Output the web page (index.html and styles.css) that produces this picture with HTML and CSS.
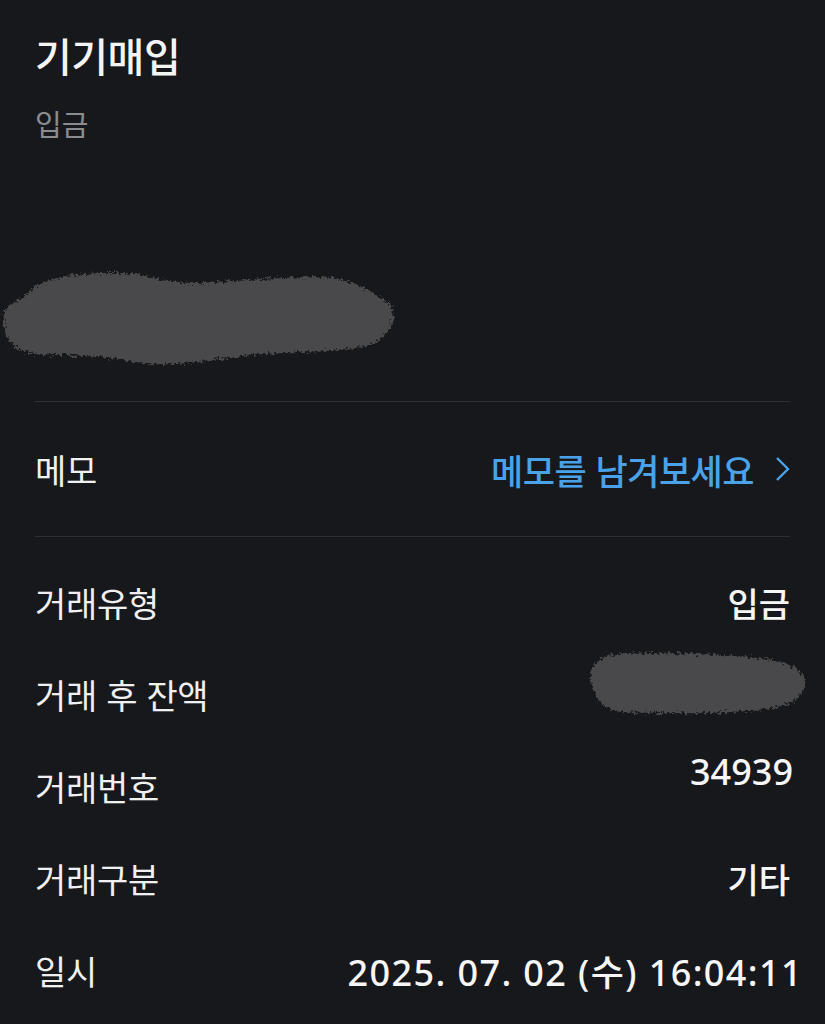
FILE: index.html
```html
<!DOCTYPE html>
<html lang="ko">
<head>
<meta charset="utf-8">
<link rel="stylesheet" href="styles.css">
</head>
<body>
<div class="page">
  <header class="head">
    <h1 class="title">기기매입</h1>
    <div class="subtitle">입금</div>
    <div class="amount">
      <svg class="blob1" width="420" height="120" viewBox="0 0 420 120">
        <defs>
          <filter id="rough" x="-10%" y="-20%" width="120%" height="140%">
            <feTurbulence type="fractalNoise" baseFrequency="0.35" numOctaves="3" seed="4" result="n"/>
            <feDisplacementMap in="SourceGraphic" in2="n" scale="9" xChannelSelector="R" yChannelSelector="G"/>
          </filter>
        </defs>
        <path filter="url(#rough)" fill="#4a4a4c" d="M4 52 C10 45 22 40 30 32 C42 20 70 14 110 14 C150 14 160 24 200 24 C240 22 280 18 320 18 C350 18 380 36 392 48 C398 62 386 80 370 86 C340 94 300 92 250 96 C200 102 170 110 130 102 C90 94 60 98 30 94 C10 90 2 76 4 52 Z"/>
      </svg>
    </div>
  </header>

  <div class="memo">
    <span class="label">메모</span>
    <span class="memo-link">메모를 남겨보세요
      <svg class="chev" width="16" height="26" viewBox="0 0 16 26"><polyline points="3,2 14,13 3,24" fill="none" stroke="#4aa3e8" stroke-width="2.4" stroke-linejoin="miter"/></svg>
    </span>
  </div>

  <div class="rows">
    <div class="row"><span class="label">거래유형</span><span class="value">입금</span></div>
    <div class="row"><span class="label">거래 후 잔액</span><span class="value blob-cell">
      <svg class="blob2" width="230" height="80" viewBox="0 0 230 80">
        <path filter="url(#rough)" fill="#4a4a4c" d="M8 34 C12 20 20 12 40 12 C90 10 150 12 190 18 C210 22 222 30 224 40 C222 52 214 62 190 66 C150 72 90 72 40 70 C22 68 10 54 8 34 Z"/>
      </svg>
    </span></div>
    <div class="row"><span class="label">거래번호</span><span class="value num up">34939</span></div>
    <div class="row"><span class="label">거래구분</span><span class="value">기타</span></div>
    <div class="row"><span class="label">일시</span><span class="value num wide">2025. 07. 02 (수) 16:04:11</span></div>
  </div>
</div>
</body>
</html>
```
FILE: styles.css
```css
html, body {
  margin: 0;
  padding: 0;
  background: #17181c;
}
body {
  font-family: "Noto Sans CJK KR", "Noto Sans", sans-serif;
  color: #f2f2f3;
  width: 825px;
  height: 1024px;
  overflow: hidden;
}
.page {
  padding: 0 35px;
}
.head {
  padding-top: 29px;
  border-bottom: 1px solid #2d2f34;
}
.title {
  margin: 0;
  font-size: 40px;
  line-height: 52px;
  font-weight: 500;
  letter-spacing: -0.5px;
  color: #f4f4f5;
}
.subtitle {
  margin-top: 22px;
  font-size: 29px;
  line-height: 40px;
  color: #8b8c90;
}
.amount {
  height: 258px;
  margin-left: -35px;
  box-sizing: border-box;
  display: flex;
  align-items: flex-start;
}
.blob1 {
  display: block;
  margin-top: 116px;
}
.memo {
  height: 134px;
  display: flex;
  align-items: center;
  justify-content: space-between;
  border-bottom: 1px solid #2d2f34;
}
.label {
  font-size: 34px;
  font-weight: 400;
  color: #f0f0f1;
  letter-spacing: -0.3px;
}
.memo-link {
  display: flex;
  align-items: center;
  gap: 20px;
  font-size: 35px;
  font-weight: 500;
  color: #4aa3e8;
  letter-spacing: -0.5px;
}
.chev {
  display: block;
}
.rows {
  padding-top: 19px;
}
.row {
  height: 92px;
  display: flex;
  align-items: center;
  justify-content: space-between;
}
.value {
  font-size: 34px;
  font-weight: 500;
  color: #f6f6f7;
}
.value.num {
  font-family: "Noto Sans", "Noto Sans CJK KR", sans-serif;
  font-size: 36px;
}
.value.up {
  margin-top: -30px;
  margin-right: -3px;
}
.value.wide {
  margin-right: -13px;
  letter-spacing: 1.4px;
}
.blob-cell {
  margin-right: -22px;
  margin-top: -24px;
}
.blob2 {
  display: block;
}
```
